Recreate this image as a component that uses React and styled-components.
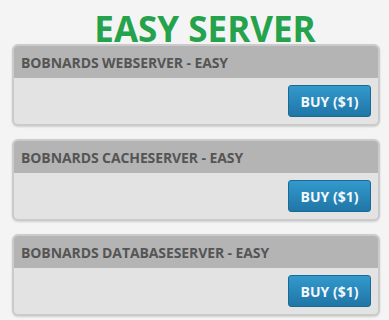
import React from 'react';
import styled, { createGlobalStyle } from 'styled-components';

const GlobalStyle = createGlobalStyle`
  body {
    margin: 0;
    background: #f4f4f4;
    font-family: 'Open Sans', 'Liberation Sans', sans-serif;
  }
`;

const Page = styled.div`
  width: 389px;
  height: 320px;
  padding: 13px 9px 0 12px;
  box-sizing: border-box;
  display: flex;
  flex-direction: column;
  gap: 13px;
  overflow: hidden;
`;

const Title = styled.h1`
  margin: 0 0 -14px;
  padding-left: 18px;
  font-size: 35px;
  line-height: 32px;
  font-weight: 700;
  color: #25a24c;
  text-align: center;
`;

const Card = styled.div`
  height: 82px;
  box-sizing: border-box;
  display: flex;
  flex-direction: column;
  border: 2px solid #cbcbcb;
  border-radius: 6px;
  background: #e3e3e3;
  box-shadow: 0 1px 2px rgba(0, 0, 0, 0.15);
  overflow: hidden;
`;

const CardHeader = styled.div`
  height: 32px;
  display: flex;
  align-items: center;
  padding-left: 7px;
  background: #b4b4b4;
  color: #555;
  font-size: 14px;
  font-weight: 700;
  letter-spacing: -0.1px;
`;

const CardBody = styled.div`
  flex: 1;
  display: flex;
  justify-content: flex-end;
  align-items: flex-start;
  padding: 7px 7px 0 0;
`;

const BuyButton = styled.button`
  width: 83px;
  height: 32px;
  border: 1px solid #1b6a96;
  border-radius: 3px;
  background: linear-gradient(to bottom, #3399cc, #1f76a6);
  color: #f2f8fc;
  font-family: inherit;
  font-size: 14px;
  font-weight: 700;
  cursor: pointer;
`;

const servers = ['WEBSERVER', 'CACHESERVER', 'DATABASESERVER'];

export default function App() {
  return (
    <Page>
      <GlobalStyle />
      <Title>EASY SERVER</Title>
      {servers.map((name) => (
        <Card key={name}>
          <CardHeader>BOBNARDS {name} - EASY</CardHeader>
          <CardBody>
            <BuyButton>BUY ($1)</BuyButton>
          </CardBody>
        </Card>
      ))}
    </Page>
  );
}
